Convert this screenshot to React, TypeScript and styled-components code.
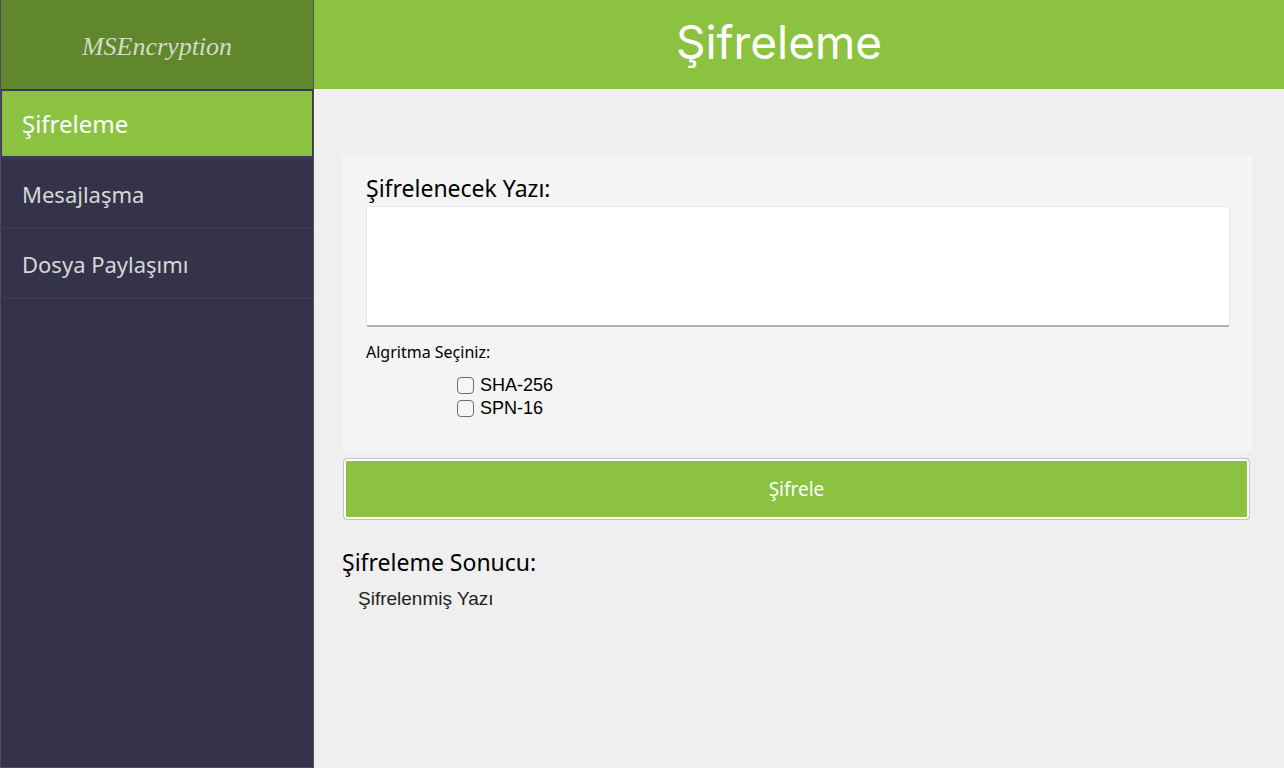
import React, { useState } from "react";
import styled, { createGlobalStyle } from "styled-components";

const GlobalStyle = createGlobalStyle`
  *, *::before, *::after { box-sizing: border-box; }
  body {
    margin: 0;
    background: #efefef;
    color: #000;
    font-family: "Noto Sans", sans-serif;
  }
`;

const Shell = styled.div`
  display: grid;
  grid-template-columns: 314px minmax(0, 1fr);
  min-height: 100vh;
`;

const Sidebar = styled.aside`
  background: #34334a;
  border: 1px solid #4c4b62;
  border-top: 0;
`;

const Brand = styled.div`
  display: flex;
  align-items: center;
  justify-content: center;
  height: 89px;
  padding-top: 4px;
  background: #60872b;
  color: #d3dbc8;
  font-family: "Liberation Serif", serif;
  font-style: italic;
  font-size: 26px;
  line-height: 32px;
`;

const NavLink = styled.a<{ $active?: boolean }>`
  display: flex;
  align-items: center;
  height: 70px;
  background: ${(p) => (p.$active ? "#8bc240" : "#34334a")};
  border: solid #393857;
  border-width: ${(p) => (p.$active ? "2px 1px 3px" : "0 0 2px")};
  padding: ${(p) => (p.$active ? "0 20px" : "2px 21px 0")};
  color: ${(p) => (p.$active ? "#fff" : "#d8d8d8")};
  font-size: ${(p) => (p.$active ? "24px" : "22px")};
  line-height: 32px;
  text-decoration: none;
`;

const Header = styled.header`
  display: flex;
  align-items: center;
  justify-content: center;
  height: 89px;
  padding: 0 40px 6px 0;
  background: #8bc240;
`;

const Title = styled.h1`
  margin: 0;
  color: #fff;
  font-family: Inter, sans-serif;
  font-size: 46px;
  font-weight: 400;
  line-height: 56px;
`;

const Content = styled.main`
  padding: 66px 32px 32px 28px;
`;

const Panel = styled.section`
  height: 296px;
  padding: 16px 22px 32px 24px;
  background: #f4f4f4;
`;

const FieldLabel = styled.label`
  display: block;
  font-size: 23px;
  line-height: 35px;
`;

const TextBox = styled.textarea`
  display: block;
  width: 100%;
  height: 121px;
  padding: 8px;
  border: 1px solid #e6e6e6;
  border-bottom: 2px solid #b0b0b0;
  border-radius: 3px;
  background: #fff;
  font: 18px "Liberation Sans", sans-serif;
  resize: none;
  outline: none;
`;

const Choices = styled.fieldset`
  margin: 12px 0 0;
  padding: 0;
  border: 0;
`;

const Legend = styled.legend`
  padding: 0 0 9px;
  font-size: 16px;
  line-height: 26px;
`;

const Choice = styled.label`
  display: flex;
  align-items: center;
  gap: 6px;
  width: max-content;
  margin-left: 91px;
  font: 18px/23px "Liberation Sans", sans-serif;
`;

const Tick = styled.input`
  appearance: none;
  width: 17px;
  height: 17px;
  margin: 0;
  border: 1px solid #6c6c6c;
  border-radius: 4px;
  background: #f6f6f6;
  &:checked { background: #8bc240; }
`;

const SubmitFrame = styled.div`
  padding: 7px 2px 0 1px;
`;

const Submit = styled.button`
  display: block;
  width: 100%;
  height: 62px;
  padding: 2px;
  border: 1px solid #c4c4c4;
  border-radius: 4px;
  background: #8bc240;
  box-shadow: inset 0 0 0 2px #fff;
  color: #fff;
  font: 19px/28px "Noto Sans", sans-serif;
`;

const ResultTitle = styled.h2`
  margin: 25px 0 0;
  font-size: 23px;
  font-weight: 400;
  line-height: 34px;
`;

const Result = styled.output`
  display: block;
  padding: 8px 16px;
  font: 19px/24px "Liberation Sans", sans-serif;
  color: #222;
`;

const pages = ["Şifreleme", "Mesajlaşma", "Dosya Paylaşımı"];
const algorithms = ["SHA-256", "SPN-16"];

export default function App() {
  const [page, setPage] = useState(pages[0]);
  return (
    <>
      <GlobalStyle />
      <Shell>
        <Sidebar>
          <Brand>MSEncryption</Brand>
          <nav>
            {pages.map((name) => (
              <NavLink key={name} href="#" $active={name === page} onClick={() => setPage(name)}>
                {name}
              </NavLink>
            ))}
          </nav>
        </Sidebar>
        <div>
          <Header>
            <Title>{page}</Title>
          </Header>
          <Content>
            <Panel>
              <FieldLabel htmlFor="plain">Şifrelenecek Yazı:</FieldLabel>
              <TextBox id="plain" />
              <Choices>
                <Legend>Algritma Seçiniz:</Legend>
                {algorithms.map((name) => (
                  <Choice key={name}>
                    <Tick type="checkbox" name="algorithm" value={name} />
                    {name}
                  </Choice>
                ))}
              </Choices>
            </Panel>
            <SubmitFrame>
              <Submit type="button">Şifrele</Submit>
            </SubmitFrame>
            <ResultTitle>Şifreleme Sonucu:</ResultTitle>
            <Result>Şifrelenmiş Yazı</Result>
          </Content>
        </div>
      </Shell>
    </>
  );
}
